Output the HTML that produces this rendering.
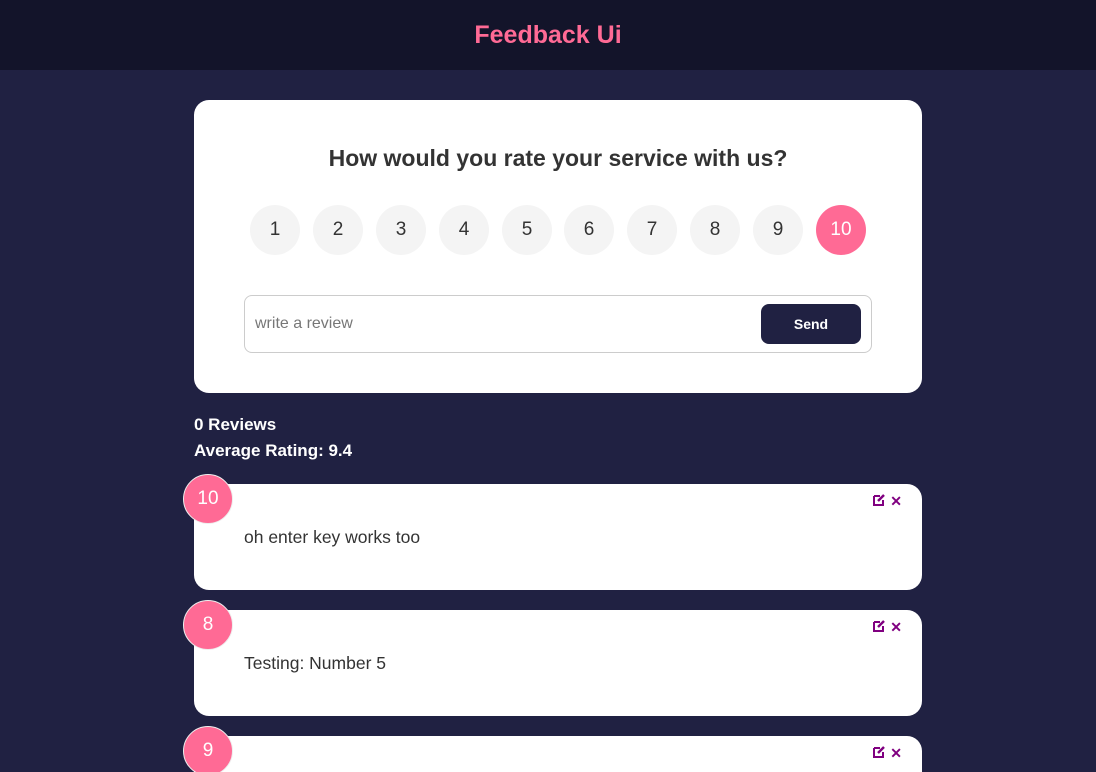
<!DOCTYPE html>
<html style="overflow:hidden;height:772px"><head><style>
*{box-sizing:border-box;margin:0;padding:0}
body{width:1096px;height:772px;overflow:hidden;background:#202142;font-family:"Liberation Sans",sans-serif;position:relative}
header{height:70px;background:#13142a;text-align:center;line-height:70px;color:#ff6a95;font-weight:bold;font-size:25px}
.card{position:absolute;left:194px;width:728px;background:#fff;border-radius:15px}
.top{top:100px;height:293px;text-align:center}
h2{margin-top:45px;font-size:23px;color:#333;font-weight:bold;line-height:26px}
.nums{position:absolute;top:105px;left:56px}
.n{position:absolute;width:50px;height:50px;border-radius:50%;background:#f4f4f4;color:#333;font-size:19px;line-height:50px;text-align:center}
.inp{position:absolute;left:50px;top:195px;width:628px;height:58px;border:1px solid #ccc;border-radius:8px}
.inp span{position:absolute;left:10px;top:19px;color:#777;font-size:16px}
.btn{position:absolute;right:10px;top:8px;width:100px;height:40px;background:#202142;color:#fff;border-radius:8px;font-size:14px;font-weight:bold;line-height:40px;text-align:center}
.stats{position:absolute;left:194px;top:412px;color:#fff;font-weight:bold;font-size:17px;line-height:26px}
.rev{height:106px;overflow:visible}
.rev p{position:absolute;left:50px;top:43px;font-size:17.5px;color:#333}
.badge{position:absolute;left:-11px;top:-10px;width:50px;height:50px;border-radius:50%;background:#ff6a95;border:1px solid #eee;color:#fff;font-size:19px;line-height:48px;text-align:center}
.ic{position:absolute;right:20px;top:9px;color:#800080;font-size:14px;font-weight:bold}
</style></head><body>
<header>Feedback Ui</header>
<div class="card top">
<h2>How would you rate your service with us?</h2>
<div class="nums">
<div class="n" style="left:0">1</div><div class="n" style="left:63px">2</div><div class="n" style="left:126px">3</div><div class="n" style="left:189px">4</div><div class="n" style="left:252px">5</div><div class="n" style="left:314px">6</div><div class="n" style="left:377px">7</div><div class="n" style="left:440px">8</div><div class="n" style="left:503px">9</div><div class="n" style="left:566px;background:#ff6a95;color:#fff">10</div>
</div>
<div class="inp"><span>write a review</span><div class="btn">Send</div></div>
</div>
<div class="stats">0 Reviews<br>Average Rating: 9.4</div>
<div class="card rev" style="top:484px"><div class="badge">10</div><div class="ic"><svg width="13" height="13" viewBox="0 0 13 13"><path d="M1 3h6M1 3v9h9V7" stroke="#800080" stroke-width="2" fill="none"/><path d="M5 8l6-6" stroke="#800080" stroke-width="2.5"/></svg> ✕</div><p>oh enter key works too</p></div>
<div class="card rev" style="top:610px"><div class="badge">8</div><div class="ic"><svg width="13" height="13" viewBox="0 0 13 13"><path d="M1 3h6M1 3v9h9V7" stroke="#800080" stroke-width="2" fill="none"/><path d="M5 8l6-6" stroke="#800080" stroke-width="2.5"/></svg> ✕</div><p>Testing: Number 5</p></div>
<div class="card" style="top:736px;height:36px;border-radius:15px 15px 0 0"><div class="badge">9</div><div class="ic"><svg width="13" height="13" viewBox="0 0 13 13"><path d="M1 3h6M1 3v9h9V7" stroke="#800080" stroke-width="2" fill="none"/><path d="M5 8l6-6" stroke="#800080" stroke-width="2.5"/></svg> ✕</div></div>
</body></html>
